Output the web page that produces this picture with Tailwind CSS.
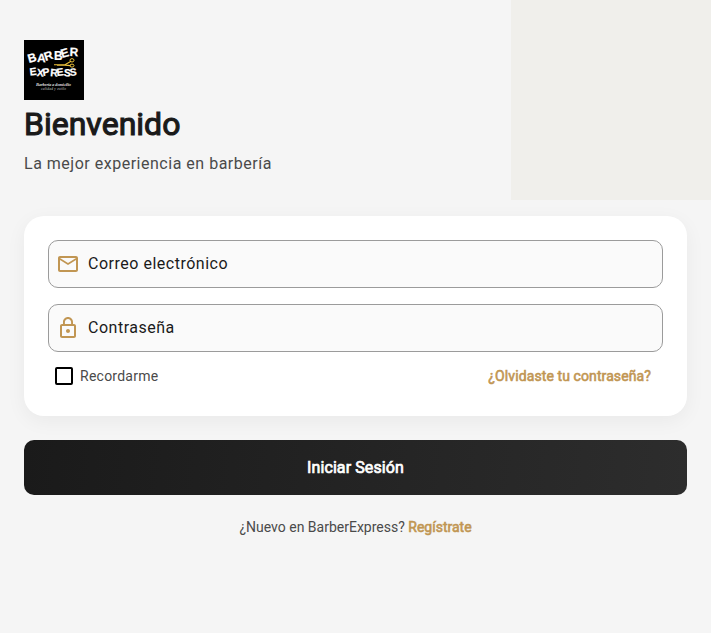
<!DOCTYPE html>
<html lang="es">
<head>
<meta charset="utf-8">
<title>BarberExpress</title>
<script src="https://cdn.jsdelivr.net/npm/@tailwindcss/browser@4"></script>
</head>
<body class="relative h-[633px] overflow-hidden bg-[#f5f5f5] font-[Roboto,sans-serif] text-[#1a1a1a]">
<div class="absolute top-0 right-0 h-[200px] w-[200px] bg-[#f0efeb]"></div>
<main class="relative flex flex-col px-6 pt-10">
  <svg class="h-[60px] w-[60px]" viewBox="0 0 60 60" role="img" aria-label="Barber Express">
    <rect width="60" height="60" fill="#000"/>
    <g fill="#fff" stroke="#fff" stroke-width=".2" font-family="Liberation Sans" font-weight="bold">
      <text font-size="12" x="5 13 21.500 30 38 45.500" y="23 22 21 19.500 18 16" rotate="-16 2 -18 0 -16 2">BARBER</text>
      <text font-size="10.500" x="6 12.500 19 26 33 39.500 46" y="35.500 36 36 36 36 36 36" rotate="-6 6 -8 5 -7 6 -5">EXPRESS</text>
    </g>
    <path d="M30 24.700h11l6-3.500M33 25.300l8-.2 5.500.5" fill="none" stroke="#efc33c" stroke-width="1.100"/>
    <g fill="none" stroke="#efc33c" stroke-width="1"><ellipse cx="48" cy="20.300" rx="2" ry="1.700"/><ellipse cx="48" cy="25.600" rx="2" ry="1.500"/></g>
    <g fill="#ddd" font-family="Liberation Serif" font-style="italic" font-weight="bold">
      <text x="12" y="45.500" font-size="4.500" textLength="35">Barbería a domicilio</text>
      <text x="17" y="50" font-size="3.500" textLength="25" fill="#999">calidad y estilo</text>
    </g>
  </svg>
  <h1 class="mt-1 text-[32px] leading-10 font-normal [-webkit-text-stroke:1.1px_#1a1a1a]">Bienvenido</h1>
  <p class="mt-2 text-base leading-6 tracking-[0.51px] text-[#4a4a4a]">La mejor experiencia en barbería</p>

  <section class="mt-10 flex h-[200px] flex-col rounded-[20px] bg-white p-6 shadow-[0_5px_20px_rgba(0,0,0,0.05)]">
    <div class="flex h-12 items-center gap-2 rounded-[10px] border border-[#9b9b9b] bg-[#fafafa] pl-[7px]">
      <svg class="h-6 w-6 fill-[#c19653]" viewBox="0 0 24 24"><path d="M22 6c0-1.100-.9-2-2-2H4c-1.100 0-2 .9-2 2v12c0 1.100.9 2 2 2h16c1.100 0 2-.9 2-2V6zm-2 0l-8 5-8-5h16zm0 12H4V8l8 5 8-5v10z"/></svg>
      <span class="text-base tracking-[0.51px]">Correo electrónico</span>
    </div>
    <div class="mt-4 flex h-12 items-center gap-2 rounded-[10px] border border-[#9b9b9b] bg-[#fafafa] pl-[7px]">
      <svg class="h-6 w-6 fill-[#c19653]" viewBox="0 0 24 24"><path d="M12 17c1.100 0 2-.9 2-2s-.9-2-2-2-2 .9-2 2 .9 2 2 2zm6-9h-1V6c0-2.760-2.240-5-5-5S7 3.240 7 6v2H6c-1.100 0-2 .9-2 2v10c0 1.100.9 2 2 2h12c1.100 0 2-.9 2-2V10c0-1.100-.9-2-2-2zM8.900 6c0-1.710 1.390-3.100 3.100-3.100s3.100 1.390 3.100 3.100v2H8.900V6zM18 20H6V10h12v10z"/></svg>
      <span class="text-base tracking-[0.51px]">Contraseña</span>
    </div>
    <div class="mt-[14px] flex h-5 items-center pr-3 pl-[7px] text-sm">
      <span class="h-[18px] w-[18px] rounded-[2px] border-2 border-black"></span>
      <span class="ml-[7px] tracking-[0.25px] text-[#4a4a4a]">Recordarme</span>
      <a class="ml-auto tracking-[0.1px] text-[#c19653] [-webkit-text-stroke:0.6px_#c19653]">¿Olvidaste tu contraseña?</a>
    </div>
  </section>

  <button class="mt-6 flex h-[55px] items-center justify-center rounded-[10px] bg-[linear-gradient(94.7deg,#1a1a1a,#2d2d2d)] text-base tracking-[0.1px] text-white [-webkit-text-stroke:0.7px_white]">Iniciar Sesión</button>
  <p class="mt-[22px] text-center text-sm leading-5 text-[#4a4a4a]">¿Nuevo en BarberExpress? <a class="text-[#c19653] [-webkit-text-stroke:0.6px_#c19653]">Regístrate</a></p>
</main>
</body>
</html>
